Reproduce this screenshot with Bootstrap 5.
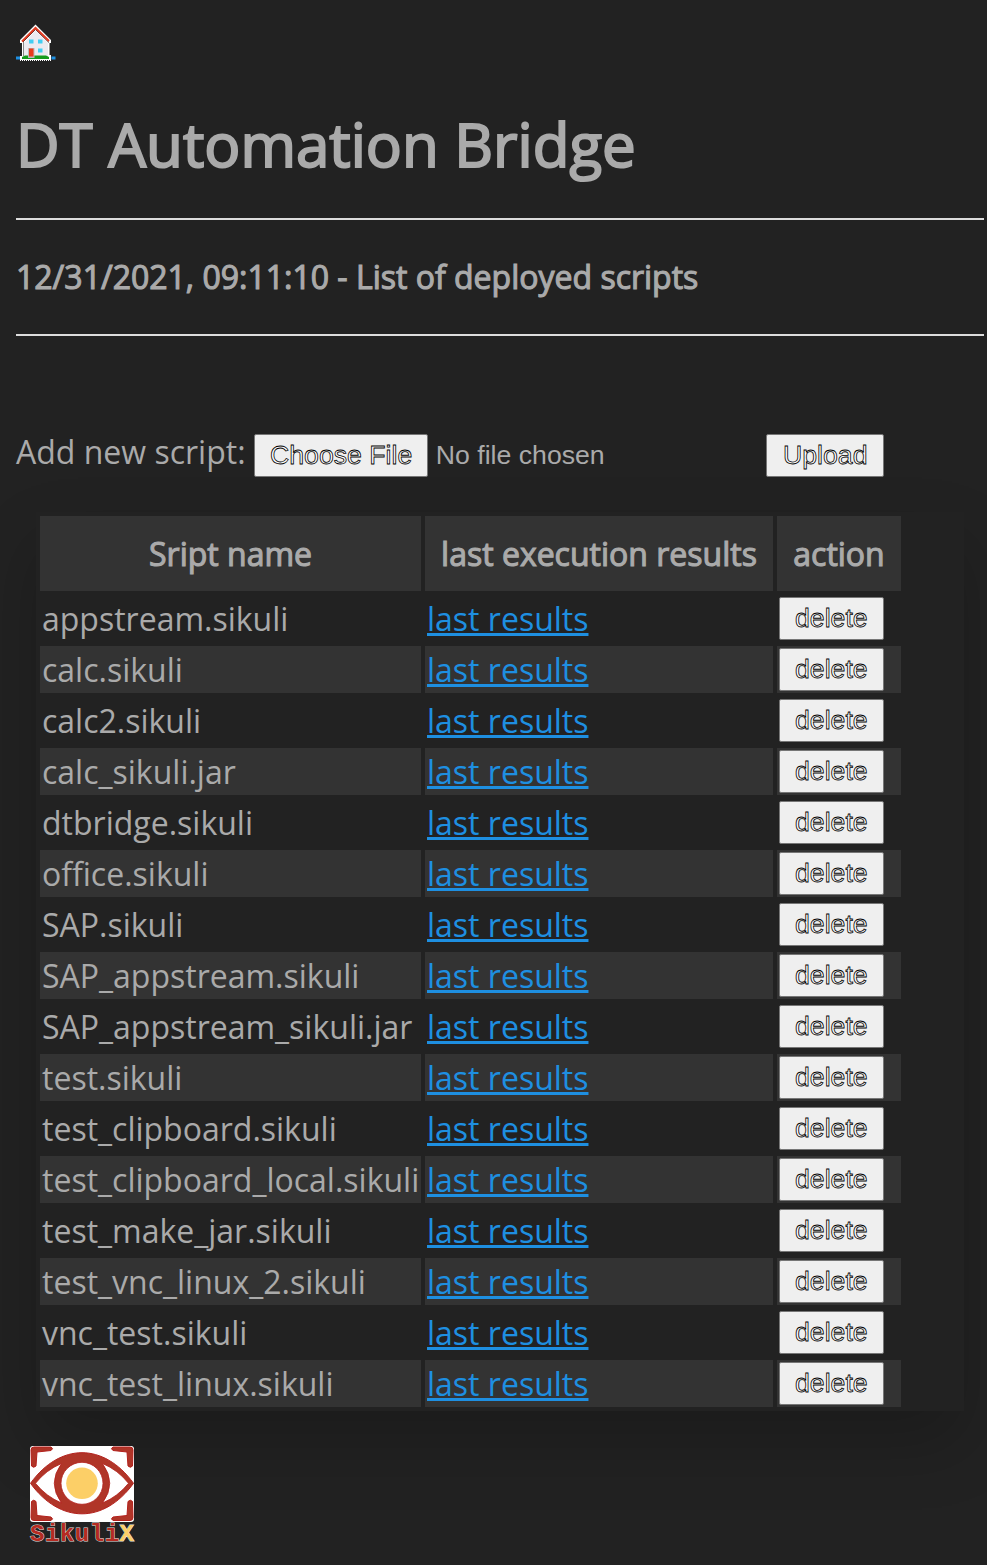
<!DOCTYPE html>
<html lang="en">
<head>
<meta charset="utf-8">
<meta name="viewport" content="width=device-width, initial-scale=1">
<title>DT Automation Bridge</title>
<link href="https://cdn.jsdelivr.net/npm/bootstrap@5.3.0/dist/css/bootstrap.min.css" rel="stylesheet">
<style>
  body { background: #222; color: #aaa; font: 32px/43px "Open Sans", sans-serif; overflow-x: hidden; min-height: 1565px; }
  .page { padding: 16px 3px 0 16px; }
  .home-link { width: 40px; height: 44px; }
  .faux { font-weight: 400; color: #aaa; -webkit-text-stroke: 1.1px #aaa; }
  h1.faux { font-size: 60px; line-height: 82px; margin: 43px 0 33px; -webkit-text-stroke-width: 2px; }
  h2.faux { font-size: 32px; line-height: 44px; margin: 35px 0 35px; }
  .rule { height: 2px; background: #ddd; }
  .upload { margin: 94px 0 36px; height: 46px; width: 868px; }
  .sys-btn { height: 43px; border: 1px solid #767676; border-radius: 2px; background: #efefef; padding: 0 15px; font: 26.667px/39px "Liberation Sans", sans-serif; color: #fff; -webkit-text-stroke: .8px #000; display: block; }
  .upload .sys-btn { padding: 0 14.5px 0 15.5px; }
  .upload .sys-btn.ms-auto { padding: 0 15.5px 0 16px; }
  .chosen { font: 26.667px/43px "Liberation Sans", sans-serif; }
  .panel { margin: 0 20px; background: #222; box-shadow: 0 32px 64px 0 rgba(0,0,0,.2); }
  .scripts { border-collapse: separate; border-spacing: 4px; table-layout: fixed; width: 869px; }
  .scripts th { background: #333; padding: 16px 0; height: 75px; text-align: center; line-height: 43px; white-space: nowrap; }
  .scripts td { padding: 2px; height: 47px; line-height: 43px; white-space: nowrap; }
  .scripts tbody tr:nth-child(even) td { background: #333; }
  .scripts a { color: #1e8fe1; text-decoration: underline; }
  .logo { margin: 35px 0 0 14px; display: block; overflow: visible; }
</style>
</head>
<body>
<main class="page">
  <a href="#" class="home-link d-block" aria-label="Home">
    <svg width="40" height="46" viewBox="0 0 40 46" class="d-block">
      <path d="M0 40.500h4v3H0zM35.500 40.500h4v3h-4z" fill="#1e8fe1"/>
      <path d="M4 45v-5h2V27H4v-3L19.500 8.500 35 24v3h-1.500v12H35v6z" fill="#fff"/>
      <path d="M8 27L19.500 14.500 32 27v15H8z" fill="#eceaf0"/>
      <path d="M7.500 26v14" stroke="#888" stroke-width="1"/>
      <path d="M7 26L19.500 13.500 33 26.500" fill="none" stroke="#333" stroke-width="1"/>
      <path d="M6 25.500L19.500 12 33 25" fill="none" stroke="#e23a20" stroke-width="2"/>
      <path d="M13 23.500h4.500v4H13zm9 0h4.500v4H22zm0 9h4.500v4H22z" fill="#42cdf2"/>
      <path d="M6 43v-2l3-1.500h21l3 1.500v2z" fill="#159c1d"/>
      <path d="M12 32h6.500v10H12z" fill="#bbb"/><path d="M13 32.500h4.500v8H13z" fill="#e83a1b"/>
      <path d="M5 44.500h29" stroke="#222" stroke-dasharray="1 1"/>
    </svg>
  </a>
  <h1 class="faux">DT Automation Bridge</h1>
  <div class="rule"></div>
  <h2 class="faux">12/31/2021, 09:11:10 - List of deployed scripts</h2>
  <div class="rule"></div>
  <form class="upload d-flex align-items-start">
    <span class="me-2">Add new script:</span>
    <button type="button" class="sys-btn mt-1 me-2">Choose File</button>
    <span class="chosen mt-1">No file chosen</span>
    <button type="button" class="sys-btn mt-1 ms-auto">Upload</button>
  </form>
  <div class="panel">
    <table class="scripts">
      <colgroup><col style="width:381px"><col style="width:348px"><col style="width:124px"></colgroup>
      <thead><tr><th class="faux">Sript name</th><th class="faux">last execution results</th><th class="faux">action</th></tr></thead>
      <tbody id="rows"></tbody>
    </table>
  </div>
  <svg class="logo" width="106" height="100" viewBox="0 0 106 100">
    <rect width="104" height="76" rx="3" fill="#fff"/>
    <g fill="#b03528" stroke="#b3201c" stroke-width="1" stroke-linejoin="round">
      <path id="corner" d="M1 4Q1 1 4 1H21Q24 2.500 21 4.500L7 6 6 20Q3.500 22.500 1.500 20Z"/>
      <use href="#corner" transform="translate(104 0) scale(-1 1)"/>
      <use href="#corner" transform="translate(0 75.500) scale(1 -1)"/>
      <use href="#corner" transform="translate(104 75.500) scale(-1 -1)"/>
      <path d="M.5 37.300C30-3.500 74-3.500 103.500 37.300C74 78 30 78 .5 37.300Z"/>
    </g>
    <g fill="#fff" stroke="#b3201c" stroke-width=".8">
      <path d="M5.500 37.300Q16 24 31.500 17.500Q17 37.300 31.500 57Q16 50.500 5.500 37.300Z"/>
      <path d="M98.500 37.300Q88 24 72.500 17.500Q87 37.300 72.500 57Q88 50.500 98.500 37.300Z"/>
      <circle cx="52" cy="37.300" r="21"/>
    </g>
    <circle cx="52" cy="37.300" r="15.800" fill="#fccf67"/>
    <text x="0" y="95" font-family="Liberation Mono, monospace" font-size="24" font-weight="700" textLength="104" fill="#b52b22" stroke="#ddd" stroke-width="1" paint-order="stroke">Sikuli<tspan fill="#fccf67">X</tspan></text>
  </svg>
</main>
<script>
  const scripts = ["appstream.sikuli", "calc.sikuli", "calc2.sikuli", "calc_sikuli.jar", "dtbridge.sikuli", "office.sikuli", "SAP.sikuli", "SAP_appstream.sikuli", "SAP_appstream_sikuli.jar", "test.sikuli", "test_clipboard.sikuli", "test_clipboard_local.sikuli", "test_make_jar.sikuli", "test_vnc_linux_2.sikuli", "vnc_test.sikuli", "vnc_test_linux.sikuli"];
  document.getElementById("rows").innerHTML = scripts.map(name =>
    `<tr><td>${name}</td><td><a href="#">last results</a></td><td><button type="button" class="sys-btn">delete</button></td></tr>`).join("");
</script>
<script src="https://cdn.jsdelivr.net/npm/bootstrap@5.3.0/dist/js/bootstrap.bundle.min.js"></script>
</body>
</html>
